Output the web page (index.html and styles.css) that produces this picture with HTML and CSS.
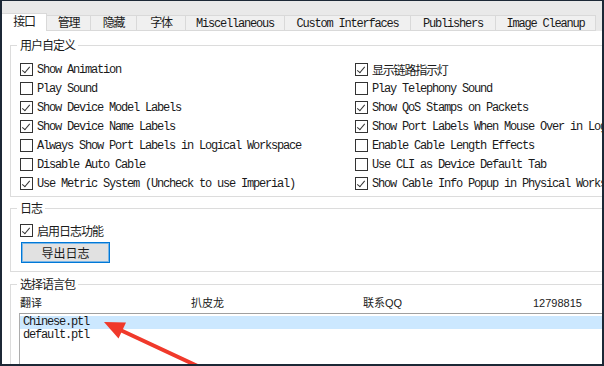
FILE: index.html
```html
<!DOCTYPE html>
<html>
<head>
<meta charset="utf-8">
<link rel="stylesheet" href="styles.css">
</head>
<body>
<div class="frame">
  <div class="tabs">
    <div class="tab active">接口</div>
    <div class="tab">管理</div>
    <div class="tab">隐藏</div>
    <div class="tab">字体</div>
    <div class="tab">Miscellaneous</div>
    <div class="tab">Custom Interfaces</div>
    <div class="tab">Publishers</div>
    <div class="tab">Image Cleanup</div>
  </div>
  <div class="page">
    <fieldset class="group g1">
      <legend>用户自定义</legend>
      <div class="grid">
        <div class="opt"><span class="cb on"></span>Show Animation</div>
        <div class="opt"><span class="cb on"></span>显示链路指示灯</div>
        <div class="opt"><span class="cb"></span>Play Sound</div>
        <div class="opt"><span class="cb"></span>Play Telephony Sound</div>
        <div class="opt"><span class="cb on"></span>Show Device Model Labels</div>
        <div class="opt"><span class="cb on"></span>Show QoS Stamps on Packets</div>
        <div class="opt"><span class="cb on"></span>Show Device Name Labels</div>
        <div class="opt"><span class="cb on"></span>Show Port Labels When Mouse Over in Logical Workspace</div>
        <div class="opt"><span class="cb"></span>Always Show Port Labels in Logical Workspace</div>
        <div class="opt"><span class="cb"></span>Enable Cable Length Effects</div>
        <div class="opt"><span class="cb"></span>Disable Auto Cable</div>
        <div class="opt"><span class="cb"></span>Use CLI as Device Default Tab</div>
        <div class="opt"><span class="cb on"></span>Use Metric System (Uncheck to use Imperial)</div>
        <div class="opt"><span class="cb on"></span>Show Cable Info Popup in Physical Workspace</div>
      </div>
    </fieldset>
    <fieldset class="group g2">
      <legend>日志</legend>
      <div class="opt cjk"><span class="cb on"></span>启用日志功能</div>
      <div class="btn">导出日志</div>
    </fieldset>
    <fieldset class="group g3">
      <legend>选择语言包</legend>
      <div class="head">
        <span class="h1">翻译</span>
        <span class="h2">扒皮龙</span>
        <span class="h3">联系QQ</span>
        <span class="h4">12798815</span>
      </div>
      <div class="list">
        <div class="item sel">Chinese.ptl</div>
        <div class="item">default.ptl</div>
      </div>
    </fieldset>
  </div>
  <svg class="arrow" width="604" height="366" viewBox="0 0 604 366">
    <line x1="206" y1="370" x2="116" y2="328" stroke="#f0392b" stroke-width="4" stroke-linecap="round"/>
    <polygon points="104,322 126,322.5 118.5,338.5" fill="#f0392b"/>
  </svg>
</div>
</body>
</html>
```
FILE: styles.css
```css
html, body {
  margin: 0;
  padding: 0;
  background: #ffffff;
}
.frame {
  position: relative;
  width: 604px;
  height: 366px;
  box-sizing: border-box;
  border-top: 1px solid #1c2836;
  border-left: 2px solid #1c2836;
  border-right: 2px solid #1c2836;
  border-bottom: 2px solid #1c2836;
  background: #ffffff;
  overflow: hidden;
  font-family: "Liberation Mono", "Noto Sans CJK SC", monospace;
  font-size: 12px;
  letter-spacing: -1.2px;
  color: #1a1a1a;
}
.tabs {
  display: flex;
  align-items: flex-end;
  height: 30px;
  background: #e9e9e9;
}
.tab {
  box-sizing: border-box;
  height: 16px;
  line-height: 16px;
  text-align: center;
  background: #f0f0f0;
  border-top: 1px solid #d9d9d9;
  border-right: 1px solid #d9d9d9;
  border-bottom: 1px solid #d9d9d9;
  white-space: nowrap;
  flex: none;
}
.tab.active {
  height: 18px;
  line-height: 19px;
  background: #ffffff;
  border-bottom: none;
}
.tab:nth-child(1) { width: 45px; }
.tab:nth-child(2) { width: 44px; }
.tab:nth-child(3) { width: 46px; }
.tab:nth-child(4) { width: 49px; }
.tab:nth-child(5) { width: 99px; }
.tab:nth-child(6) { width: 126px; }
.tab:nth-child(7) { width: 85px; }
.tab:nth-child(8) { width: 100px; }
.page {
  display: flex;
  flex-direction: column;
  padding: 7px 0 0 8px;
}
.group {
  margin: 0;
  width: 640px;
  box-sizing: border-box;
  border: 1px solid #dcdcdc;
  padding: 0 0 0 8px;
  min-width: 0;
}
.group legend {
  padding: 0 3px;
  margin-left: -2px;
  height: 14px;
  line-height: 14px;
  font-family: "Noto Sans CJK SC", sans-serif;
  font-size: 12px;
  letter-spacing: -1px;
}
.g1 {
  padding-top: 8px;
  padding-bottom: 3px;
}
.grid {
  display: grid;
  grid-template-columns: 335px 1fr;
  grid-auto-rows: 19px;
}
.opt {
  display: flex;
  align-items: center;
  gap: 4px;
  white-space: nowrap;
  padding-left: 1px;
}
.cb {
  flex: none;
  box-sizing: border-box;
  width: 13px;
  height: 13px;
  border: 1px solid #333333;
  background: #ffffff;
  position: relative;
}
.cb.on::after {
  content: "";
  position: absolute;
  left: 3px;
  top: 1px;
  width: 3px;
  height: 7px;
  border-right: 1px solid #333333;
  border-bottom: 1px solid #333333;
  transform: rotate(40deg);
}
.g2 {
  margin-top: 4px;
  padding-top: 6px;
  padding-bottom: 8px;
}
.g2 .opt {
  height: 19px;
  font-family: "Noto Sans CJK SC", sans-serif;
  font-size: 12px;
  letter-spacing: -1px;
}
.btn {
  margin: 2px 0 0 2px;
  width: 89px;
  height: 21px;
  box-sizing: border-box;
  border: 1px solid #0078d7;
  background: #e1e1e1;
  box-shadow: inset 0 0 0 1px #7ab6e6;
  text-align: center;
  line-height: 19px;
  font-family: "Noto Sans CJK SC", sans-serif;
  font-size: 12px;
  letter-spacing: 0;
}
.g3 {
  margin-top: 5px;
  padding-top: 4px;
  padding-bottom: 40px;
}
.head {
  position: relative;
  height: 16px;
  line-height: 16px;
  margin-bottom: 2px;
  display: grid;
  grid-template-columns: 171px 172px 170px 1fr;
  padding-left: 1px;
  font-family: "Liberation Sans", "Noto Sans CJK SC", sans-serif;
  font-size: 11px;
  letter-spacing: 0;
  color: #222222;
}
.list {
  border-top: 1px solid #a0a0a0;
  border-left: 1px solid #adadad;
  padding-top: 2px;
  height: 60px;
}
.item {
  height: 13px;
  line-height: 13px;
  padding-left: 3px;
}
.item.sel {
  background: #cce8ff;
}
.arrow {
  position: absolute;
  left: -2px;
  top: -1px;
  pointer-events: none;
}
```
